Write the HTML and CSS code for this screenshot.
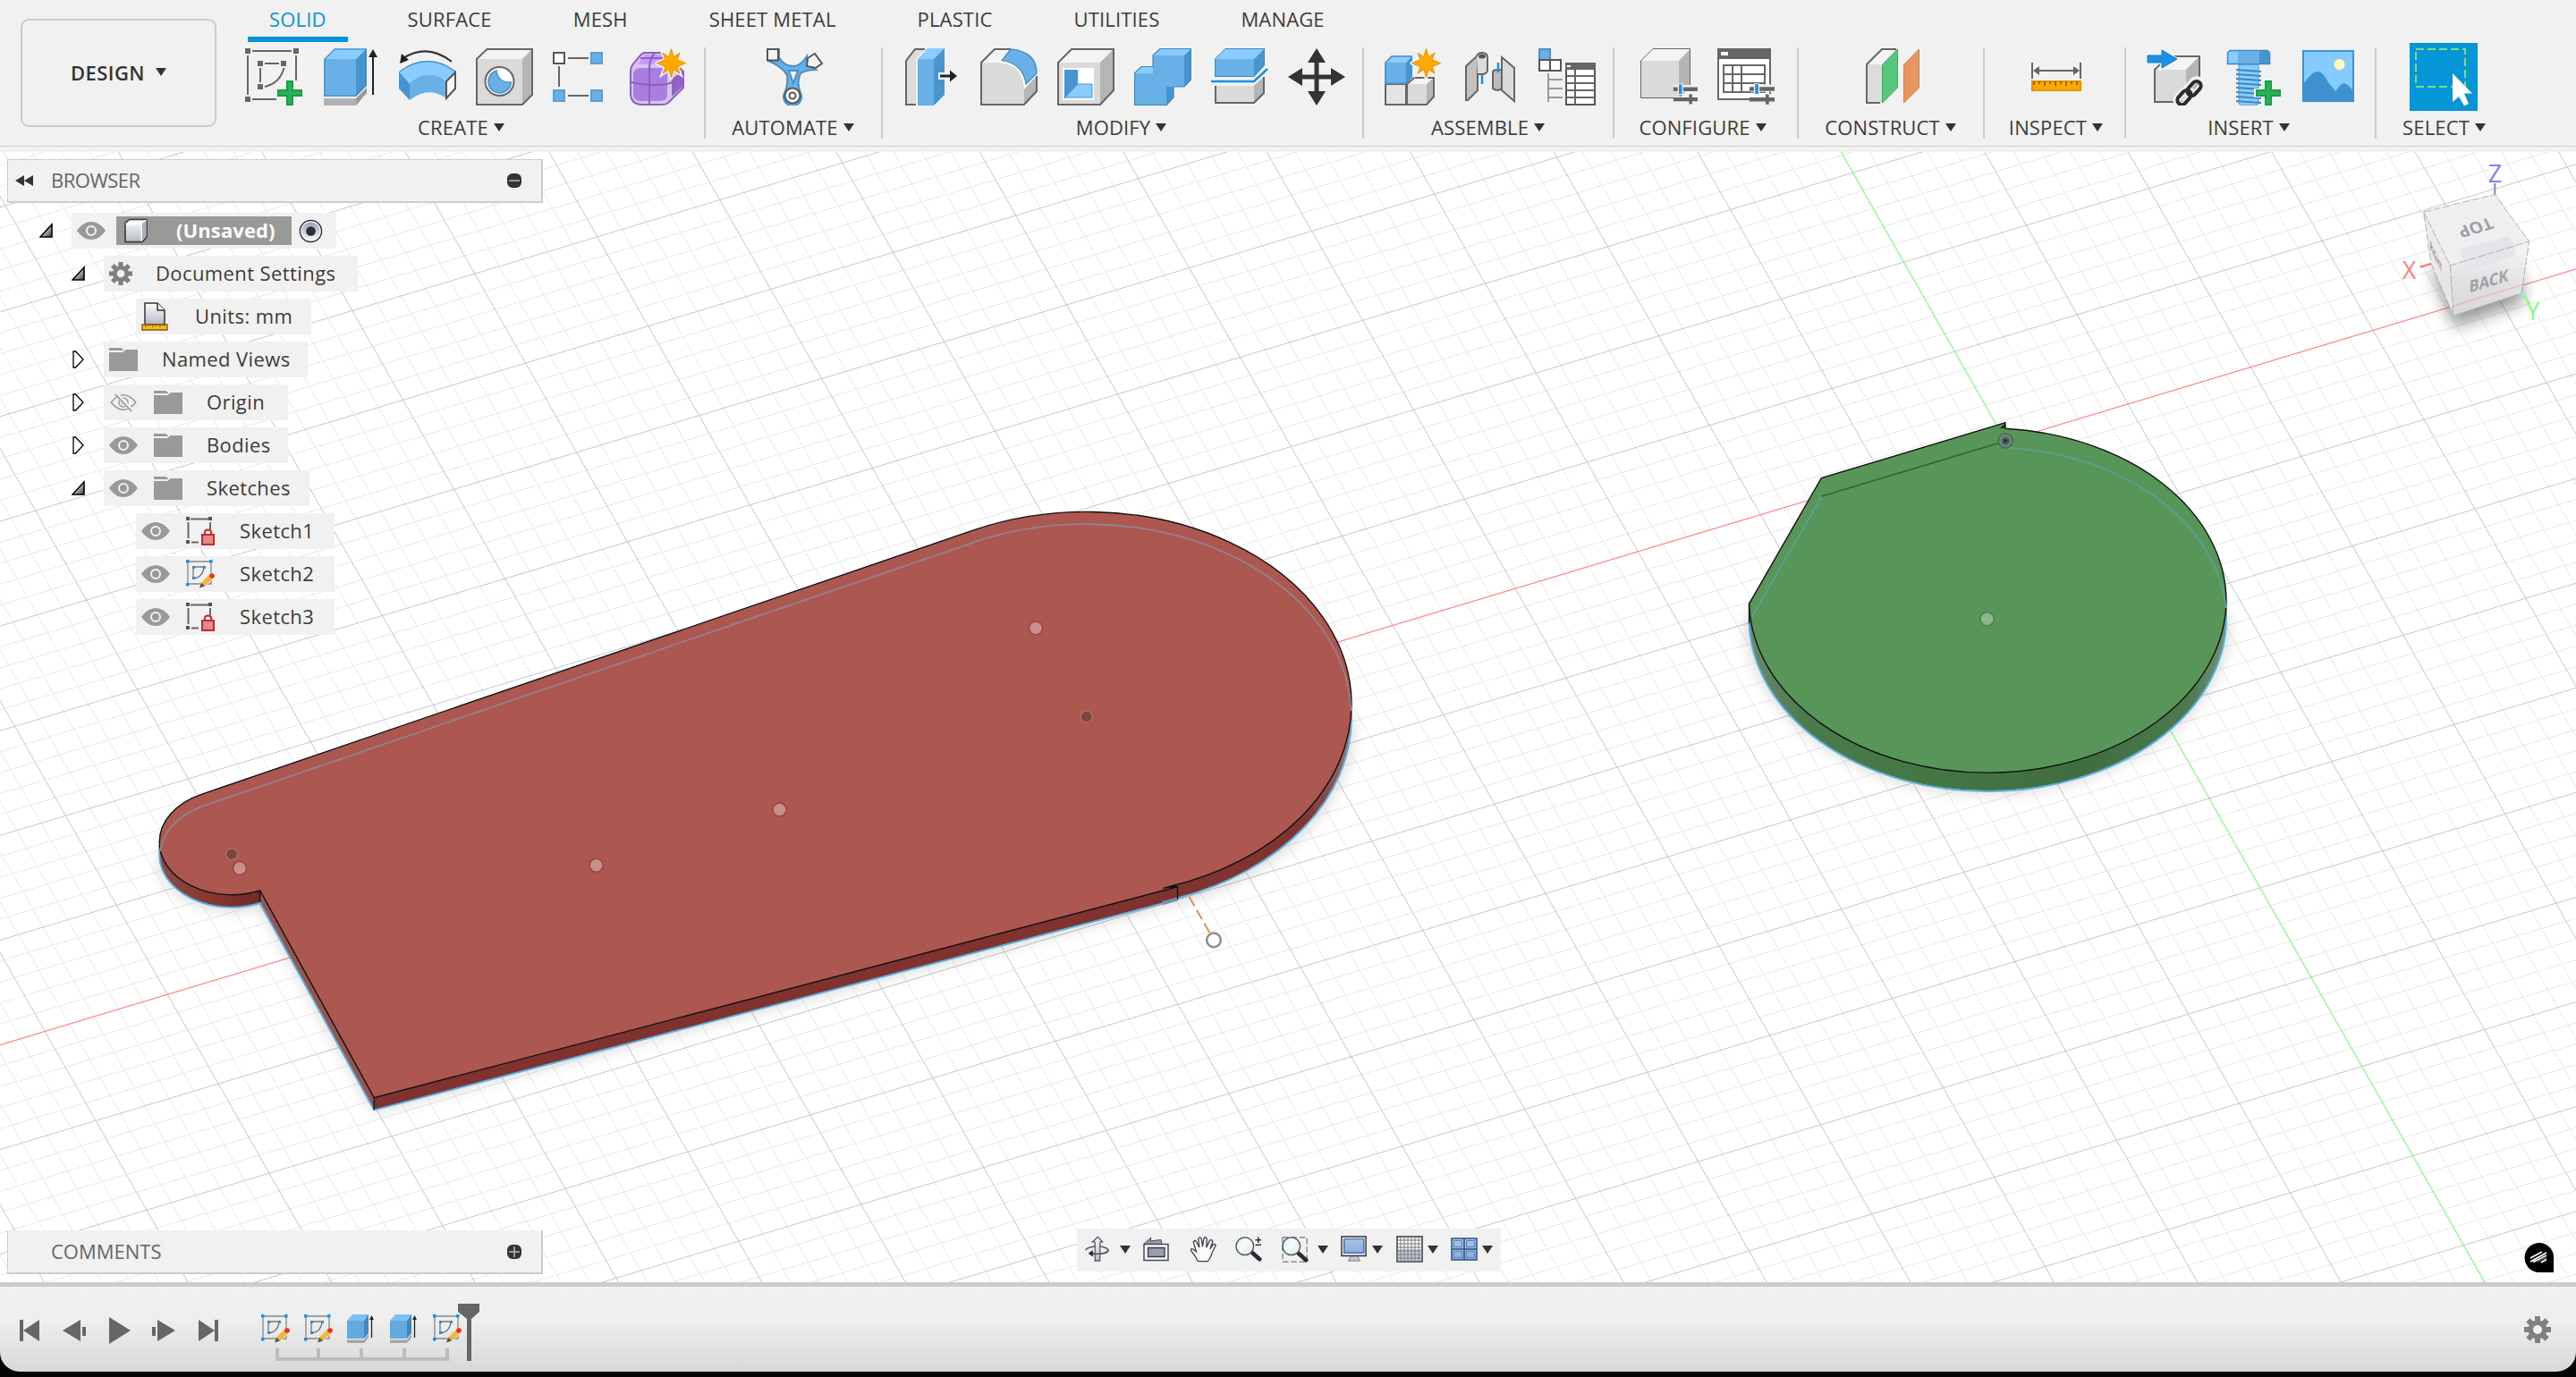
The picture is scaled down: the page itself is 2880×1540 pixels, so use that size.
FILE: index.html
```html
<!DOCTYPE html>
<html lang="en">
<head>
<meta charset="utf-8">
<title>Design workspace</title>
<link rel="stylesheet" href="styles.css">
</head>
<body>
<svg class="defs" width="0" height="0" aria-hidden="true">
  <defs>
    <linearGradient id="g-steel" x1="0" y1="0" x2="0" y2="1"><stop offset="0" stop-color="#fff"/><stop offset="1" stop-color="#b4b9c4"/></linearGradient>
    <linearGradient id="g-tri" x1="0" y1="0" x2="1" y2="1"><stop offset="0.3" stop-color="#eee"/><stop offset="1" stop-color="#333"/></linearGradient>
    <linearGradient id="g-screen" x1="0" y1="0" x2="0" y2="1"><stop offset="0" stop-color="#a9c4e6"/><stop offset="1" stop-color="#8aaedb"/></linearGradient>
    <linearGradient id="g-lens" x1="0" y1="0" x2="1" y2="1"><stop offset="0" stop-color="#d3e6e6"/><stop offset="0.4" stop-color="#f6fcfc"/><stop offset="1" stop-color="#d9e8e8"/></linearGradient>
    <symbol id="i-star" viewBox="-18 -18 36 36"><path d="M0-16 2.700-7 9.500-11.500 6.500-4 16 0 6.500 4 9.500 11.500 2.700 7 0 16-2.700 7-9.500 11.500-6.500 4-16 0-6.500-4-9.500-11.500-2.700-7Z" fill="#f1f1f1" stroke="#f1f1f1" stroke-width="4"/><path d="M0-16 2.700-7 9.500-11.500 6.500-4 16 0 6.500 4 9.500 11.500 2.700 7 0 16-2.700 7-9.500 11.500-6.500 4-16 0-6.500-4-9.500-11.500-2.700-7Z" fill="#ffa800" stroke="#e39500"/></symbol>
    <symbol id="i-plus" viewBox="0 0 28 28"><path d="M11 1h6v10h10v6h-10v10h-6v-10h-10v-6h10z" fill="#28b257" stroke="#1c9c46" stroke-width="2"/></symbol>
    <symbol id="i-sliders" viewBox="0 0 32 28"><path d="M2 7H32M2 22H32M24 14V28" stroke="#f1f1f1" stroke-width="9"/><path d="M1 8H32M1 21H32" stroke="#666" stroke-width="5"/><path d="M23 14.500V27" stroke="#666" stroke-width="4"/><path d="M10 1V15" stroke="#f1f1f1" stroke-width="7"/><path d="M10 2V14" stroke="#1e8fe6" stroke-width="4"/></symbol>

    <symbol id="i-sketch" viewBox="0 0 64 64"><path d="M8 3H52M3 8V52M57 8V36M8 57H35M22 17H38M17 22V38" stroke="#666" stroke-width="2" fill="none"/><path d="M43.500 22Q39 39 22 43" stroke="#666" stroke-width="2" fill="none"/><path d="M0 0h6v6h-6zM54 0h6v6h-6zM0 54h6v6h-6zM14 14h6v6h-6zM40 14h6v6h-6zM14 40h6v6h-6z" fill="#666"/><use href="#i-plus" x="36" y="36" width="28" height="28"/></symbol>
    <symbol id="i-extrude" viewBox="0 0 64 64"><path d="M2 12 14 0H50L38 12Z" fill="#8accff"/><path d="M2 12H38V54H2Z" fill="#68b0e6"/><path d="M38 12 50 0V42L38 54Z" fill="#4794cf"/><path d="M3 53V12.500L14.500 1H49V41.500L37.500 53Z" fill="none" stroke="#3d87c0" stroke-width="1.500" opacity=".7"/><path d="M2 56H38V64H2Z" fill="#b1b1b1"/><path d="M38 56 50 44V50L38 64Z" fill="#999"/><path d="M57 8V52" stroke="#222" stroke-width="2"/><path d="M52 10 57 1l5 9z" fill="#222"/></symbol>
    <symbol id="i-revolve" viewBox="0 0 64 64"><path d="M0 26Q32 2 64 26L52.500 36Q32 24 12 41Z" fill="#8accff"/><path d="M0 26 12 40V58L0 45Z" fill="#4794cf"/><path d="M12 39Q32 22 52 36V55Q32 42 12 58Z" fill="#68b0e6"/><path d="M1 26Q32 3 63 26" fill="none" stroke="#4794cf" stroke-width="1.500"/><path d="M53 37 63 27V45L53 56Z" fill="#f8f8f8" stroke="#555" stroke-width="2"/><path d="M59 15Q32-6 5 11" fill="none" stroke="#333" stroke-width="2.200"/><path d="M1 17 3 6 11 13Z" fill="#222"/></symbol>
    <symbol id="i-hole" viewBox="0 0 64 64"><path d="M1 12 12.500 1H63V52L52 63H1Z" fill="#dadada"/><path d="M1 12 12.500 1H63L52 12Z" fill="#f4f4f4"/><path d="M52 12 63 1V52L52 63Z" fill="#b5b5b5"/><path d="M1 12 12.500 1H63V52L52 63H1Z" fill="none" stroke="#666" stroke-width="2"/><circle cx="26.500" cy="37" r="16" fill="#fff" stroke="#666" stroke-width="2"/><path d="M23 25A12.800 12.800 0 1 0 39.500 38Q25 39 23 25Z" fill="#68b0e6" stroke="#4794cf" stroke-width="1.500"/></symbol>
    <symbol id="i-pattern" viewBox="0 0 64 64"><path d="M17 11H40M7 20V43M17 53H40" stroke="#666" stroke-width="2"/><path d="M1 5h12v12h-12z" fill="#fff" stroke="#555" stroke-width="2"/><path d="M43 5h12v12h-12zM1 47h12v12h-12zM43 47h12v12h-12z" fill="#68b0e6" stroke="#5a9fd2" stroke-width="2"/></symbol>
    <symbol id="i-form" viewBox="0 0 64 64"><path d="M17 5H38L60 26V44L43 61Q40 63 36 63H14Q1 63 1 50V26Q1 20 6 15L12 8Q14 5 17 5Z" fill="#d9c3f3" stroke="#8b63ba" stroke-width="2"/><path d="M12 22H34Q42 22 42 30V52Q42 59 34 59H12Q4 59 4 51V30Q4 22 12 22Z" fill="#a97ee0"/><path d="M17 7H36L40 18H9Z" fill="#c39bf8"/><path d="M47 34 59 26V43L47 54Z" fill="#8f63c4"/><path d="M2 38Q22 43 42 40Q54 36 59 30M22 63V22Q22 12 28 5M12 11H40" stroke="#8b63ba" stroke-width="2" fill="none"/><use href="#i-star" x="28.500" y="-1.300" width="36" height="36"/></symbol>

    <symbol id="i-automate" viewBox="0 0 64 64"><path d="M2 14Q17 20 23 30Q24 43 20 50A10 10 0 1 0 38 50Q33 38 38 28Q44 24 55 24L45 18V9Q38 20 30 20Q19 20 14 10V2Z" fill="#68b0e6" stroke="#4a90c8" stroke-width="2"/><path d="M25 25H35L30 39Z" fill="#f6f6f6" stroke="#4a90c8" stroke-width="2"/><path d="M1 1h12v12.500h-12z" fill="#f4f4f4" stroke="#555" stroke-width="2"/><path d="M54 6 62 17 55 22 45 20 46 11Z" fill="#f4f4f4" stroke="#555" stroke-width="2"/><circle cx="29" cy="53" r="8.500" fill="#fff" stroke="#555" stroke-width="2"/><circle cx="29" cy="53" r="3.500" fill="#fff" stroke="#555" stroke-width="2"/></symbol>

    <symbol id="i-press" viewBox="0 0 64 64"><path d="M3 12 13 1H24L14 12V63H3Z" fill="#dcdcdc"/><path d="M14 63H3V14L13 1H24" fill="none" stroke="#666" stroke-width="2"/><path d="M16 12 27 0H46L34 12Z" fill="#8accff"/><path d="M16 12H34V64H16Z" fill="#68b0e6"/><path d="M34 12 46 0V52L34 64Z" fill="#4794cf"/><path d="M39 27h11v-6l13 10-13 10v-6h-11z" fill="#f1f1f1"/><path d="M41 29.500h11v-5l8 6.500-8 6.500v-5h-11z" fill="#222"/></symbol>
    <symbol id="i-fillet" viewBox="0 0 64 64"><path d="M1 16 16 1H34L22 16Z" fill="#f4f4f4"/><path d="M1 16H20Q49 18 49 46V63H1Z" fill="#dadada"/><path d="M49 46 63 31V48L49 63Z" fill="#b5b5b5"/><path d="M34 1H16L1 16V63H49L63 48V31" fill="none" stroke="#666" stroke-width="2"/><path d="M34 1Q63 4 63 28L51 40Q48 18 24 14Z" fill="#68b0e6" stroke="#4a90c8" stroke-width="1.500"/><path d="M22 15Q47 17 50 44" fill="none" stroke="#fff" stroke-width="2"/></symbol>
    <symbol id="i-shell" viewBox="0 0 64 64"><path d="M1 16 16 1H63V47L48 63H1Z" fill="#dadada"/><path d="M1 16 16 1H63L48 16Z" fill="#f4f4f4"/><path d="M48 16 63 1V47L48 63Z" fill="#b5b5b5"/><path d="M1 16 16 1H63V47L48 63H1Z" fill="none" stroke="#666" stroke-width="2"/><path d="M6 22H41V58H6Z" fill="#fff"/><path d="M8 24H23V40L8 56Z" fill="#4794cf"/><path d="M8 56 23 40H39V55H8Z" fill="#8accff" stroke="#4a90c8"/></symbol>
    <symbol id="i-combine" viewBox="0 0 64 64"><path d="M21 8 29 0H64L56 8ZM0 28 8 20H21V28Z" fill="#8accff"/><path d="M21 8H56V43H36V64H0V28H21Z" fill="#68b0e6"/><path d="M56 8 64 0V35L56 43ZM36 43H44V55L36 64Z" fill="#4794cf"/><path d="M.500 28 8 20.500H21V8L29 .500H63.500V35L56 43H44V55L36 63.500H.500Z" fill="none" stroke="#3d87c0" stroke-width="1.200"/></symbol>
    <symbol id="i-split" viewBox="0 0 64 64"><path d="M4 12 16 0H60L48 12Z" fill="#8accff"/><path d="M4 12H48V32H4Z" fill="#68b0e6"/><path d="M48 12 60 0V19L48 32Z" fill="#4794cf"/><path d="M4.500 31.500V12L16 .500H59.500V19L48 31.500Z" fill="none" stroke="#3d87c0"/><path d="M0 37H48L63 23" stroke="#1e8fe6" stroke-width="2.500" fill="none"/><path d="M5 42H48L59 32V50L48 61H5Z" fill="#dadada"/><path d="M48 42 59 32V50L48 61Z" fill="#b5b5b5"/><path d="M5 42V61H48L59 50V32" fill="none" stroke="#666" stroke-width="2"/></symbol>
    <symbol id="i-move" viewBox="0 0 64 64"><path d="M32 0 42 16H34.500V29.500H48V22L64 32 48 42V34.500H34.500V48H42L32 64 22 48H29.500V34.500H16V42L0 32 16 22V29.500H29.500V16H22Z" fill="#333"/></symbol>

    <symbol id="i-component" viewBox="0 0 64 64"><path d="M1 40H24V63H1Z" fill="#e4e4e4" stroke="#666" stroke-width="2"/><path d="M26 40 33 33H55V54L47 63H26Z" fill="#dadada"/><path d="M26 40 33 33H55L47 40Z" fill="#f4f4f4"/><path d="M47 40 55 33V54L47 63Z" fill="#b5b5b5"/><path d="M25 40 33 33H55V54L47 63H25Z" fill="none" stroke="#666" stroke-width="2"/><path d="M0 16 8 8H31L24 16Z" fill="#8accff"/><path d="M0 16H24V40H0Z" fill="#68b0e6"/><path d="M24 16 31 8V32L24 40Z" fill="#4794cf"/><path d="M1 39V16L8 9H30V32L24 39Z" fill="none" stroke="#4a90c8" stroke-width="1.500"/><use href="#i-star" x="28.500" y="-1.300" width="36" height="36"/></symbol>
    <symbol id="i-joint" viewBox="0 0 64 64"><path d="M5 20 18 8V47L7 58H5Z" fill="#c2c2c2" stroke="#666" stroke-width="2"/><path d="M17 9Q18 5 23 5Q29 5 29 10V25Q28 29 23 29H18" fill="#dadada" stroke="#666" stroke-width="2"/><ellipse cx="23" cy="9" rx="4" ry="2.500" fill="#555"/><path d="M23 30V40" stroke="#1e8fe6" stroke-width="2.500"/><path d="M45 10 59 22V59L45 47Z" fill="#dadada" stroke="#666" stroke-width="2"/><path d="M35 27Q35 24 40 24H45V45Q40 49 35 45Z" fill="#bcbcbc" stroke="#666" stroke-width="2"/><path d="M41 16V27" stroke="#1e8fe6" stroke-width="2.500"/></symbol>
    <symbol id="i-bom" viewBox="0 0 64 64"><path d="M1 1h12v12h-12z" fill="#68b0e6" stroke="#4a90c8" stroke-width="2"/><path d="M1 13h12v12h-12zM13 13h12v12h-12z" fill="#fff" stroke="#555" stroke-width="2"/><path d="M11 28V60M11 35H27M11 45H27M11 55H27" stroke="#999" stroke-width="2" fill="none"/><path d="M31 17H63V63H31Z" fill="#fff" stroke="#555" stroke-width="2"/><path d="M30 16H64V24H30Z" fill="#666"/><path d="M32 19h4v2h-4z" fill="#fff"/><path d="M31 31H63M31 39H63M31 47H63M31 55H63M41 24V63" stroke="#666" stroke-width="2"/></symbol>
    <symbol id="i-config" viewBox="0 0 64 64"><path d="M1 14 14 .500H56V42L43 56H1Z" fill="#dadada"/><path d="M1 14 14 .500H56L43 14Z" fill="#f4f4f4"/><path d="M43 14 56 .500V42L43 56Z" fill="#b5b5b5"/><path d="M.500 14 14 .500H55.500V42L43 55.500H.500Z" fill="none" stroke="#666"/><use href="#i-sliders" x="36" y="38" width="28" height="26"/></symbol>
    <symbol id="i-ctable" viewBox="0 0 64 64"><path d="M1 1H59V57H1Z" fill="#fff" stroke="#666" stroke-width="2"/><path d="M0 0H60V12H0Z" fill="#666"/><path d="M4 4h8v4h-8z" fill="#fff"/><path d="M7 19H53V49H7ZM7 29H53M7 39H53M17 19V49M27 19V49" stroke="#666" stroke-width="2" fill="none"/><use href="#i-sliders" x="35" y="38" width="29" height="26"/></symbol>
    <symbol id="i-plane" viewBox="0 0 64 64"><path d="M3 18 20 1H38L20 18V61H3Z" fill="#dcdcdc"/><path d="M3 18 20 1H36L20 18Z" fill="#f4f4f4"/><path d="M18 61H3V18L20 1H36" fill="none" stroke="#666" stroke-width="2"/><path d="M20.500 18.500 37.500 1V44L20.500 61Z" fill="#57c57d" stroke="#3daa63"/><path d="M44.500 18.500 61.500 1V44L44.500 61Z" fill="#e59661" stroke="#cf7f48"/></symbol>
    <symbol id="i-measure" viewBox="0 0 64 64"><path d="M5 16V34M59 16V34M8 25H56" stroke="#666" stroke-width="2"/><path d="M6 25 13 20V30ZM58 25 51 20V30Z" fill="#666"/><path d="M5 37H59V47H5Z" fill="#ffa800" stroke="#e39500" stroke-width="2"/><path d="M7 37V41M13 37V40M19 37V42M25 37V40M31 37V42M37 37V40M43 37V42M49 37V40M55 37V41" stroke="#7a5410" stroke-width="1.500"/></symbol>
    <symbol id="i-derive" viewBox="0 0 64 64"><path d="M9 24 24 9H59V46L44 60H9Z" fill="#dadada"/><path d="M9 24 24 9H59L44 24Z" fill="#f4f4f4"/><path d="M44 24 59 9V46L44 60Z" fill="#b5b5b5"/><path d="M9 24 24 9H59V46L44 60H9Z" fill="none" stroke="#666" stroke-width="2"/><path d="M0 6H15V-1L37 12 15 25V18H0Z" fill="#f1f1f1"/><path d="M1 8H17V2L34 12 17 22V16H1Z" fill="#1e8fe6" stroke="#1678c6"/><g fill="none" stroke="#f1f1f1" stroke-width="8"><rect x="-10" y="-5.500" width="20" height="11" rx="5.500" transform="translate(53 44) rotate(-48)"/><rect x="-10" y="-5.500" width="20" height="11" rx="5.500" transform="translate(42 55) rotate(-48)"/></g><g fill="none" stroke="#2b2b2b" stroke-width="4"><rect x="-9" y="-5" width="18" height="10" rx="5" transform="translate(53 45) rotate(-48)"/><rect x="-9" y="-5" width="18" height="10" rx="5" transform="translate(42 55) rotate(-48)"/></g></symbol>
    <symbol id="i-bolt" viewBox="0 0 64 64"><path d="M17 18H39V62L36 64H20L17 62Z" fill="#8accff" stroke="#4a90c8"/><path d="M7 2.500H49L51.500 5V17.500H4.500V5Z" fill="#8accff" stroke="#3d87c0" stroke-width="1.500"/><path d="M16 3H40V17H16Z" fill="#68b0e6"/><path d="M40 3H49L51 5V17H40Z" fill="#4794cf"/><path d="M14 24 42 26M14 29 42 31M14 34 42 36M14 39 42 41M14 44 42 46M14 49 42 51M14 54 42 56M14 59 42 61" stroke="#3d87c0" stroke-width="1.800"/><path d="M34 45H45V34H55V45H66V55H55V66H45V55H34Z" fill="#f1f1f1"/><use href="#i-plus" x="36" y="36" width="28" height="28"/></symbol>
    <symbol id="i-picture" viewBox="0 0 64 64"><path d="M2 2H60V60H2Z" fill="#84cbff"/><path d="M2 60V42Q12 26 19 26Q25 26 31 38L39 48Q46 38 49 39Q55 41 60 50V60Z" fill="#3f92cf"/><circle cx="43.500" cy="18" r="6.500" fill="#fdf9c4" stroke="#9ec9d8"/><path d="M3 3H59V59H3Z" fill="none" stroke="#3f92cf" stroke-width="2"/></symbol>
    <symbol id="i-select" viewBox="0 0 76 76"><path d="M0 0H76V76H0Z" fill="#0696d7"/><path d="M7 7H62V49H7Z" fill="none" stroke="#7be07b" stroke-width="2" stroke-dasharray="9 4"/><path d="M48 34V66L55 60 61 70.500 66 68 61 56.500H70Z" fill="#fff"/></symbol>

    <symbol id="t-open" viewBox="0 0 16 16"><path d="M14 1V15H1Z" fill="url(#g-tri)" stroke="#000" stroke-width="1.600"/></symbol>
    <symbol id="t-closed" viewBox="0 0 16 20"><path d="M2 1H4.500L13 10 4.500 19H2Z" fill="#fff" stroke="#000" stroke-width="1.300"/></symbol>
    <symbol id="i-eye" viewBox="0 0 32 22"><path d="M0 11Q7 1 16 1T32 11Q25 21 16 21T0 11Z" fill="#999"/><circle cx="16" cy="11" r="5" fill="#999" stroke="#f1f1f1" stroke-width="2"/></symbol>
    <symbol id="i-eyeoff" viewBox="0 0 32 24"><path d="M1 12Q8 3 16 3T31 12Q24 21 16 21T1 12Z" fill="none" stroke="#999" stroke-width="1.700"/><circle cx="16" cy="12" r="5.500" fill="none" stroke="#999" stroke-width="1.700"/><circle cx="16" cy="12" r="2.500" fill="#999"/><path d="M7 1 27 23" stroke="#f1f1f1" stroke-width="5"/><path d="M6 2 26 23" stroke="#999" stroke-width="1.800"/></symbol>
    <symbol id="i-folder" viewBox="0 0 32 26"><path d="M0 0H13L16 2V3H0ZM0 5H15L19 2H32V26H0Z" fill="#999"/></symbol>
    <symbol id="i-gear" viewBox="-15 -15 30 30"><g fill="currentColor"><path d="M-3-15H3V15H-3Z"/><path d="M-3-15H3V15H-3Z" transform="rotate(45)"/><path d="M-3-15H3V15H-3Z" transform="rotate(90)"/><path d="M-3-15H3V15H-3Z" transform="rotate(135)"/><circle r="10.500"/></g><circle r="5" fill="#f1f1f1"/></symbol>
    <symbol id="i-doc" viewBox="0 0 28 28"><path d="M1 5 6 1H26V21L21 27H1Z" fill="url(#g-steel)" stroke="#333" stroke-width="1.600"/><path d="M1.500 6H20V26M20 6 25.500 1.500" stroke="#fff" fill="none" stroke-width="1.500"/><path d="M20.700 6 25.500 1.700V20.700L20.700 26Z" fill="#aab0bb"/></symbol>
    <symbol id="i-radio" viewBox="0 0 28 28"><circle cx="14" cy="14" r="12.500" fill="#fff" stroke="#2c3340" stroke-width="1.500"/><circle cx="14" cy="14" r="10.500" fill="url(#g-radio)"/><circle cx="14" cy="14" r="5.500" fill="#2a2d33"/></symbol>
    <linearGradient id="g-radio" x1="0" y1="0" x2="0" y2="1"><stop offset="0" stop-color="#98a3b8"/><stop offset="1" stop-color="#f4f6fa"/></linearGradient>
    <symbol id="i-units" viewBox="0 0 30 32"><path d="M4 1H18L26 9V25H4Z" fill="url(#g-steel)" stroke="#333" stroke-width="1.500"/><path d="M18 1V9H26" fill="#fff" stroke="#333" stroke-width="1.500"/><path d="M1 25H29V31H1Z" fill="#f2bd2b" stroke="#8a5a08" stroke-width="1.400"/><path d="M5 25V28M9 25V27M13 25V28M17 25V27M21 25V28M25 25V27" stroke="#8a5a08"/></symbol>
    <symbol id="i-sklock" viewBox="0 0 32 32"><path d="M5 2.500H25M2.500 6V24M27 6V14M6 28.500H14" stroke="#666" stroke-width="2"/><path d="M0 0h4v4h-4zM25 0h4v4h-4zM0 26h4v4h-4z" fill="#555"/><path d="M18 20H31V31H18Z" fill="#e08a8a" stroke="#cc2626" stroke-width="2"/><path d="M21 20V17Q21 14.500 24.500 14.500T28 17V20" fill="none" stroke="#cc2626" stroke-width="2"/></symbol>
    <symbol id="i-skpen" viewBox="0 0 32 32"><path d="M2 2H28V27H2Z" fill="none" stroke="#888" stroke-width="1.300"/><path d="M8 8H20Q19 20 8 21Z" fill="none" stroke="#777" stroke-width="1.300"/><path d="M0 0h3.500v3.500h-3.500zM26 0h3.500v3.500h-3.500zM0 26h3.500v3.500h-3.500zM7 7h3v3h-3zM19 7h3v3h-3zM7 19h3v3h-3z" fill="#1e8fe6"/><path d="M15 31.500 17 25 26.500 16 31 20.500 21.500 29.500Z" fill="#f3b73e" stroke="#f1f1f1" stroke-width=".8"/><path d="M15 31.500 17 25.500 21 29.500Z" fill="#555"/><circle cx="29" cy="18" r="2.800" fill="#ee2b2b"/></symbol>
    <symbol id="i-ext-s" viewBox="0 0 32 32"><path d="M0 7 6 0H24L19 7Z" fill="#7cc0f3"/><path d="M0 7H19V27H0Z" fill="#62a9e0"/><path d="M19 7 24 0V21L19 27Z" fill="#4088c4"/><path d="M0 28.500H19V32H0ZM19 28.500 24 22V26L19 32Z" fill="#a5a5a5"/><path d="M27.500 4V26" stroke="#222" stroke-width="1.300"/><path d="M25 6 27.500 1 30 6Z" fill="#222"/></symbol>

    <symbol id="n-orbit" viewBox="0 0 30 32"><path d="M1 17.500A13.500 4.500 0 1 1 9 21.500" fill="none" stroke="#555b66" stroke-width="1.600"/><path d="M15 1 20.500 7H17.500V29.500H11.500V7H8.500Z" transform="translate(.5 .5)" fill="url(#g-steel)" stroke="#444a55" stroke-width="1.200"/><path d="M28 17.500Q25 22.500 8 21.500" fill="none" stroke="#555b66" stroke-width="1.800"/><path d="M4 21 9.500 17V25Z" fill="#23262c"/></symbol>
    <symbol id="n-look" viewBox="0 0 30 30"><path d="M1 9 9 2 8 6 20 4.500 21 10H2Z" fill="#9aa0ab" stroke="#444a55"/><path d="M1 9.500H28V27.500H1Z" fill="#f8f8fa" stroke="#444a55" stroke-width="1.500"/><path d="M5.500 13.500H24V23.500H5.500Z" fill="#9aa0ab" stroke="#333947" stroke-width="1.300"/></symbol>
    <symbol id="n-hand" viewBox="0 0 32 32"><path d="M9.500 30Q8 25 4 21 L1.500 17.500Q1.500 15 4 16L8 19 4.500 7.500Q6 4.500 8 7L11.500 14 10.500 3.500Q12 .500 14 3.500L15.500 13 17 3Q19 .500 20.500 3.500L20 14 24 5.500Q27 4 27.500 7L24.500 16 28 10.500Q31 9 31 12Q27 19 25.500 24Q24 28 21.500 30.500H12Z" fill="#fbfbfd" stroke="#3c414b" stroke-width="1.400"/></symbol>
    <symbol id="n-zoom" viewBox="0 0 32 32"><path d="M20 20 29 28" stroke="#2a2d33" stroke-width="5" stroke-linecap="round"/><circle cx="11.500" cy="12.500" r="10.500" fill="url(#g-lens)" stroke="#4a505c" stroke-width="1.400"/><path d="M24 5H31M27.500 1.500V8.500M24 11H31" stroke="#333" stroke-width="1.600"/></symbol>
    <symbol id="n-window" viewBox="0 0 32 32"><path d="M1 2H30V31H1Z" fill="none" stroke="#777" stroke-width="1.300" stroke-dasharray="7 3"/><path d="M20 21 29 29" stroke="#2a2d33" stroke-width="5" stroke-linecap="round"/><circle cx="11.500" cy="12.500" r="10.500" fill="url(#g-lens)" stroke="#4a505c" stroke-width="1.400"/></symbol>
    <symbol id="n-display" viewBox="0 0 32 32"><path d="M12 24H20L23 30H9Z" fill="#c4c8d0" stroke="#666" stroke-width=".8"/><path d="M1 1H30V24H1Z" fill="#e8eaee" stroke="#30343c" stroke-width="1.500"/><path d="M4 4H27.500V20.500H4Z" fill="url(#g-screen)" stroke="#3b5c99" stroke-width="1.300"/></symbol>
    <symbol id="n-grid" viewBox="0 0 30 30"><path d="M1 1H29V29H1Z" fill="#fff" stroke="#30343c" stroke-width="1.500"/><path d="M5 1V29M9 1V29M13 1V29M17 1V29M21 1V29M25 1V29M1 5H29M1 9H29M1 13H29M1 17H29M1 21H29M1 25H29" stroke="#777" stroke-width="1"/><path d="M1 15H29V29H1Z" fill="#7d8699" opacity=".45"/></symbol>
    <symbol id="n-views" viewBox="0 0 30 28"><path d="M1 2H29V26H1Z" fill="url(#g-screen)" stroke="#2c5087" stroke-width="1.500"/><path d="M15 2V26M1 14H29" stroke="#2c5087" stroke-width="1.500"/><path d="M3.500 4.500h9v7h-9zM17.500 4.500h9v7h-9zM3.500 16.500h9v7h-9zM17.500 16.500h9v7h-9z" fill="none" stroke="#5d82b8"/></symbol>
  </defs>
</svg>

<div class="app">
  <header class="ribbon">
    <button class="workspace">DESIGN<i class="caret"></i></button>
    <div class="ribbon-main">
      <nav class="tabs">
        <a class="tab active">SOLID</a><a class="tab">SURFACE</a><a class="tab">MESH</a><a class="tab">SHEET METAL</a><a class="tab">PLASTIC</a><a class="tab">UTILITIES</a><a class="tab">MANAGE</a>
      </nav>
      <div class="groups">
        <section class="group g-create"><div class="icons"><svg><use href="#i-sketch"/></svg><svg><use href="#i-extrude"/></svg><svg><use href="#i-revolve"/></svg><svg><use href="#i-hole"/></svg><svg><use href="#i-pattern"/></svg><svg><use href="#i-form"/></svg></div><div class="glabel">CREATE<i class="caret"></i></div></section>
        <section class="group g-automate"><div class="icons"><svg><use href="#i-automate"/></svg></div><div class="glabel">AUTOMATE<i class="caret"></i></div></section>
        <section class="group g-modify"><div class="icons"><svg><use href="#i-press"/></svg><svg><use href="#i-fillet"/></svg><svg><use href="#i-shell"/></svg><svg><use href="#i-combine"/></svg><svg><use href="#i-split"/></svg><svg><use href="#i-move"/></svg></div><div class="glabel">MODIFY<i class="caret"></i></div></section>
        <section class="group g-assemble"><div class="icons"><svg><use href="#i-component"/></svg><svg><use href="#i-joint"/></svg><svg><use href="#i-bom"/></svg></div><div class="glabel">ASSEMBLE<i class="caret"></i></div></section>
        <section class="group g-configure"><div class="icons"><svg><use href="#i-config"/></svg><svg><use href="#i-ctable"/></svg></div><div class="glabel">CONFIGURE<i class="caret"></i></div></section>
        <section class="group g-construct"><div class="icons"><svg><use href="#i-plane"/></svg></div><div class="glabel">CONSTRUCT<i class="caret"></i></div></section>
        <section class="group g-inspect"><div class="icons"><svg><use href="#i-measure"/></svg></div><div class="glabel">INSPECT<i class="caret"></i></div></section>
        <section class="group g-insert"><div class="icons"><svg><use href="#i-derive"/></svg><svg><use href="#i-bolt"/></svg><svg><use href="#i-picture"/></svg></div><div class="glabel">INSERT<i class="caret"></i></div></section>
        <section class="group g-select"><div class="icons"><svg class="big"><use href="#i-select"/></svg></div><div class="glabel">SELECT<i class="caret"></i></div></section>
      </div>
    </div>
  </header>

  <main class="viewport">
    <svg class="scene" viewBox="0 170 2880 1264">
      <defs>
        <filter id="soft" x="-10%" y="-10%" width="120%" height="130%"><feGaussianBlur stdDeviation="9"/></filter>
        <linearGradient id="g-rim" gradientUnits="userSpaceOnUse" x1="1955" y1="0" x2="2489" y2="0"><stop offset="0" stop-color="#6a8a6d"/><stop offset=".12" stop-color="#4c7a4d"/><stop offset=".35" stop-color="#457745"/><stop offset=".7" stop-color="#406d40"/><stop offset=".92" stop-color="#4c7a4d"/><stop offset="1" stop-color="#75907a"/></linearGradient>
        <linearGradient id="r-rim" gradientUnits="userSpaceOnUse" x1="178" y1="0" x2="291" y2="0"><stop offset="0" stop-color="#8f4a45"/><stop offset=".5" stop-color="#87372f"/><stop offset="1" stop-color="#6e2a26"/></linearGradient>
        <linearGradient id="r-big" gradientUnits="userSpaceOnUse" x1="0" y1="800" x2="0" y2="920"><stop offset="0" stop-color="#a08a92"/><stop offset="1" stop-color="#80342f"/></linearGradient>
        <linearGradient id="cube-b" x1="0" y1="0" x2="0" y2="1"><stop offset="0" stop-color="#f3f3f4"/><stop offset="1" stop-color="#dcdcde"/></linearGradient>
      </defs>
      <g id="plane" transform="matrix(137 -41.27 56.9 99.95 2242.2 493.1)">
        <path id="minor" class="grid-minor"/>
        <path id="major" class="grid-major"/>
        <path class="axis-x" d="M-30 0H30"/>
        <path class="axis-y" d="M0-30V30"/>
      </g>

      <g class="body-red">
        <path d="M178 955A81 59 0 0 0 291 1012L418 1242 1318 1008A296 215 0 0 0 1512 800Z" fill="#000" opacity=".17" filter="url(#soft)"/>
        <path d="M178.200 941.700V955.400A80.800 58.700 0 0 0 290.800 1009.700V996Z" fill="url(#r-rim)"/>
        <path d="M290.800 996V1009.700L418.200 1241.400V1227.700Z" fill="#99544e"/>
        <path d="M418.200 1227.700V1241.400L1316.500 1005.500V990Z" fill="#80332e"/>
        <path d="M1511 787.500V801.200A296.300 215.100 0 0 1 1316.500 1004.500V985Z" fill="url(#r-big)"/>
        <path d="M1511 795V801.400A296.300 215.100 0 0 1 1316.500 1004.500M1316.500 1006 418.200 1241.500 290.800 1010A80.800 58.700 0 0 1 178.200 955.400V945" class="edge-blue"/>
        <path d="M224.500 888.600 1088.400 592.900A296.300 215.100 0 0 1 1511 787.500A296.300 215.100 0 0 1 1306 992L1316.500 991.800 418.200 1227.700 290.800 996A80.800 58.700 0 0 1 178.200 941.700A80.800 58.700 0 0 1 224.500 888.600Z" fill="#ad5751" stroke="#111" stroke-width="1.400"/>
        <path d="M178.800 952Q184 919 224.500 902.300L1088.400 606.600A296.300 215.100 0 0 1 1510.500 795" class="edge-grey"/>
        <path d="M290.800 996V1009M418.200 1227.700V1241M1316.500 991V1006M1300.500 993.500 1316.500 989.500" class="edge-dark"/>
        <path d="M1300 1010 1316 1005.500" stroke="#6f93ab" stroke-width="4"/>
        <path d="M1163 714 1320 984M676 965 864 908M272 978 287 1006" class="link-faint"/>
        <path d="M1329.500 1003 1353.500 1045" class="link"/>
        <g class="pt-light"><circle cx="268" cy="971" r="7.500"/><circle cx="666.700" cy="967.700" r="7.500"/><circle cx="871.500" cy="905.500" r="7.500"/><circle cx="1158" cy="702.500" r="7.500"/></g>
        <g class="pt-dark"><circle cx="259" cy="955.300" r="6.500"/><circle cx="1214.700" cy="801.400" r="6.500"/></g>
        <circle cx="1357" cy="1051.400" r="7.800" fill="#fff" stroke="#8c8c8c" stroke-width="2.500"/>
      </g>

      <g class="body-green">
        <path d="M1952 688A270 198 0 0 0 2492 688Z" fill="#000" opacity=".17" filter="url(#soft)"/>
        <path d="M1955.500 672.600V695A266.800 193.700 0 0 0 2489 693.600V672.600Z" fill="url(#g-rim)"/>
        <path d="M1955.500 696A266.800 193.700 0 0 0 2489 693.600V680" class="edge-blue"/>
        <path d="M1955.500 675.300 2036.300 534.700 2242 472.700V479.300A266.800 193.700 0 0 1 2489 672.600A266.800 193.700 0 0 1 1955.500 675.300Z" fill="#589558" stroke="#111" stroke-width="1.400"/>
        <path d="M1955.500 675V697" class="edge-dark"/>
        <path d="M2236 479 2242 473V479Z" fill="#1d301d"/>
        <path d="M2036.300 556 1958.500 690M2242 500.400A266.800 193.700 0 0 1 2488.500 680" fill="none" stroke="#58a08f" stroke-width="2"/>
        <path d="M2036.500 555 2238 494.500" stroke="#3a633a" stroke-width="1.800"/>
        <circle cx="2242.200" cy="493" r="6" fill="#4b5f55" stroke="#6d8787" stroke-width="3"/><circle cx="2242.200" cy="493" r="8" fill="none" stroke="#456b4b" stroke-width="1.500"/><circle cx="2242.200" cy="493" r="2" fill="#24352a"/>
        <circle cx="2221.600" cy="692.300" r="7.500" fill="#8db68d" stroke="#4c834c" stroke-width="1.500"/>
      </g>

      <g class="viewcube">
        <path d="M2718 300 2744 366 2822 338 2816 300Z" fill="#000" opacity=".4" filter="url(#soft)"/>
        <path d="M2709.600 237 2739.400 297 2743 353 2718 295Z" fill="#e9e9ea" opacity=".93"/>
        <path d="M2739.400 297 2827.600 270 2819 328 2743 353Z" fill="url(#cube-b)" opacity=".93"/>
        <path d="M2709.600 237 2789 217.500 2827.600 270 2739.400 297Z" fill="#eeeeef" opacity=".95"/>
        <path d="M2750 279 2805 264 2812.400 276.700 2810.600 287 2756.400 303.700 2755.500 293Z" fill="#e3e5ea"/>
        <path d="M2709.600 237 2789 217.500 2827.600 270 2819 328 2743 353 2718 295ZM2709.600 237 2739.400 297 2827.600 270M2739.400 297 2743 353" fill="none" stroke="#aaa" stroke-width=".9" stroke-dasharray="9 2"/>
        <path d="M2743 342 2822 318" stroke="#f0b0b0"/>
        <text class="face" transform="matrix(-.88 .27 -.38 -.8 2783.500 243)">TOP</text>
        <text class="face back" transform="matrix(.82 -.25 -.02 .93 2760.500 327.500)">BACK</text>
        <text class="face side" transform="matrix(.29 .62 .06 .95 2717 278)">RIGHT</text>
        <path d="M2789.300 205V217.500" stroke="#8080ff" stroke-width="2"/><path d="M2705.500 298.700 2718 295" stroke="#ff7070" stroke-width="2"/><path d="M2819 327 2828 340" stroke="#80ff80" stroke-width="2"/>
        <text class="axis" x="2789.500" y="204" fill="#8080ff">Z</text><text class="axis" x="2693.500" y="312" fill="#ff8080">X</text><text class="axis" x="2831.500" y="357.500" fill="#80ff80">Y</text>
      </g>
    </svg>

    <aside class="browser">
      <div class="panel"><svg class="collapse" viewBox="0 0 20 12"><path d="M10 0V12L0 6ZM20 0V12L10 6Z" fill="#333"/></svg><span class="ptitle">BROWSER</span><svg class="toggle" viewBox="0 0 16 16"><rect width="16" height="16" rx="6" fill="#333"/><path d="M2 8H14" stroke="#bbb" stroke-width="1.500"/></svg></div>
      <ul class="tree">
        <li class="l0"><svg class="tw"><use href="#t-open"/></svg><div class="row w296"><svg class="eye"><use href="#i-eye"/></svg><div class="sel"><svg class="cube"><use href="#i-doc"/></svg><b>(Unsaved)</b></div><svg class="radio"><use href="#i-radio"/></svg></div></li>
        <li class="l1"><svg class="tw"><use href="#t-open"/></svg><div class="row w284"><svg class="gear"><use href="#i-gear"/></svg><span>Document Settings</span></div></li>
        <li class="l2"><i class="tw"></i><div class="row w196"><svg class="units"><use href="#i-units"/></svg><span>Units: mm</span></div></li>
        <li class="l1"><svg class="tw"><use href="#t-closed"/></svg><div class="row w228"><svg class="folder"><use href="#i-folder"/></svg><span>Named Views</span></div></li>
        <li class="l1"><svg class="tw"><use href="#t-closed"/></svg><div class="row w206"><svg class="eye"><use href="#i-eyeoff"/></svg><svg class="folder"><use href="#i-folder"/></svg><span>Origin</span></div></li>
        <li class="l1"><svg class="tw"><use href="#t-closed"/></svg><div class="row w206"><svg class="eye"><use href="#i-eye"/></svg><svg class="folder"><use href="#i-folder"/></svg><span>Bodies</span></div></li>
        <li class="l1"><svg class="tw"><use href="#t-open"/></svg><div class="row w230"><svg class="eye"><use href="#i-eye"/></svg><svg class="folder"><use href="#i-folder"/></svg><span>Sketches</span></div></li>
        <li class="l2"><i class="tw"></i><div class="row w222"><svg class="eye"><use href="#i-eye"/></svg><svg class="sk"><use href="#i-sklock"/></svg><span>Sketch1</span></div></li>
        <li class="l2"><i class="tw"></i><div class="row w222"><svg class="eye"><use href="#i-eye"/></svg><svg class="sk"><use href="#i-skpen"/></svg><span>Sketch2</span></div></li>
        <li class="l2"><i class="tw"></i><div class="row w222"><svg class="eye"><use href="#i-eye"/></svg><svg class="sk"><use href="#i-sklock"/></svg><span>Sketch3</span></div></li>
      </ul>
    </aside>

    <div class="panel comments"><span class="ptitle">COMMENTS</span><svg class="toggle" viewBox="0 0 16 16"><rect width="16" height="16" rx="6" fill="#333"/><path d="M2 8H14M8 2V14" stroke="#bbb" stroke-width="1.500"/></svg></div>

    <div class="navbar">
      <svg><use href="#n-orbit"/></svg><i class="caret c1"></i>
      <svg class="m1"><use href="#n-look"/></svg><svg class="m2"><use href="#n-hand"/></svg><svg class="m2"><use href="#n-zoom"/></svg><svg class="m2"><use href="#n-window"/></svg><i class="caret c1"></i>
      <svg class="m3"><use href="#n-display"/></svg><i class="caret c2"></i>
      <svg class="m3"><use href="#n-grid"/></svg><i class="caret c2"></i>
      <svg class="m3"><use href="#n-views"/></svg><i class="caret c2"></i>
    </div>

    <svg class="assistant" viewBox="0 0 32 33"><path d="M16 0A16 16 0 0 1 32 16V33H16A16 16 0 0 1 16 0Z" fill="#000"/><path d="M6 17 19 10M6 21 24 11M9 21.500 24 14" stroke="#fff" stroke-width="1.800"/><path d="M14 21 24 16" stroke="#555" stroke-width="2"/><path d="M18 22 24 18.500" stroke="#fff" stroke-width="1.800"/></svg>
  </main>

  <footer class="timeline">
    <div class="controls">
      <svg class="k1" viewBox="0 0 22 24"><path d="M0 0H4V24H0ZM22 0V24L4 12Z" fill="#666"/></svg>
      <svg class="k2" viewBox="0 0 26 24"><path d="M20 0V24L0 12ZM22 8H26V18H22Z" fill="#666"/></svg>
      <svg class="k3" viewBox="0 0 24 30"><path d="M0 0 24 15 0 30Z" fill="#666"/></svg>
      <svg class="k2" viewBox="0 0 26 24"><path d="M6 0V24L26 12ZM0 8H4V18H0Z" fill="#666"/></svg>
      <svg class="k1" viewBox="0 0 22 24"><path d="M18 0H22V24H18ZM0 0V24L18 12Z" fill="#666"/></svg>
    </div>
    <div class="features">
      <div class="feats"><svg><use href="#i-skpen"/></svg><svg><use href="#i-skpen"/></svg><svg><use href="#i-ext-s"/></svg><svg><use href="#i-ext-s"/></svg><svg><use href="#i-skpen"/></svg></div>
      <svg class="bracket" viewBox="0 0 194 14"><path d="M2 0V12H192V0M48 0V12M96 0V12M144 0V12" fill="none" stroke="#bcbcbc" stroke-width="4"/></svg>
      <svg class="marker" viewBox="0 0 24 64"><path d="M0 0H24V9L15 17V64H10V17L0 9Z" fill="#666"/></svg>
    </div>
    <svg class="settings"><use href="#i-gear"/></svg>
  </footer>
</div>
<script src="grid.js"></script>
</body>
</html>
```

FILE: styles.css
```css
* { box-sizing: border-box; }
body { margin: 0; background: #050505; font-family: "Open Sans", "Noto Sans", sans-serif; font-size: 22px; color: #3c3c3c; }
svg { display: block; flex: none; overflow: visible; }
.defs { position: absolute; }
.app { width: 2880px; height: 1540px; display: flex; flex-direction: column; overflow: hidden; }
.caret { width: 0; height: 0; flex: none; border: 6px solid transparent; border-top: 9px solid #333; border-bottom: 0; }

/* ribbon */
.ribbon { height: 170px; flex: none; display: flex; background: linear-gradient(#f1f1f1 163px, #ccc 163px 164.500px, #f1f1f1 164.500px); }
.workspace { width: 219px; height: 121px; margin: 21px 0 0 23px; padding: 0 0 2px; border: 2px solid #ccc; border-radius: 9px; background: none; font: 600 22px "Open Sans", sans-serif; letter-spacing: .4px; color: #333; display: flex; align-items: center; justify-content: center; gap: 12px; }
.ribbon-main { display: flex; flex-direction: column; }
.tabs { height: 47px; padding-left: 35px; display: flex; gap: 43px; line-height: 42px; letter-spacing: .16px; }
.tab { padding: 0 24px; white-space: nowrap; height: 47px; }
.tab.active { color: #0696d7; border-bottom: 6px solid #0696d7; }
.groups { display: flex; margin: 6px 0 0 8px; }
.group { height: 102px; border-right: 2px solid #ccc; display: flex; flex-direction: column; align-items: center; }
.icons { height: 64px; margin-top: 1px; padding-left: 4px; display: flex; align-items: center; gap: 22px; }
.icons svg { width: 64px; height: 64px; }
.icons svg.big { width: 76px; height: 76px; }
.glabel { margin-top: 9px; height: 30px; line-height: 30px; padding-right: 1px; display: flex; align-items: center; gap: 6px; letter-spacing: .15px; }
.g-create { width: 539px; }
.g-create .glabel { padding-right: 6px; }
.g-automate { width: 198px; }
.g-modify { width: 538px; }
.g-modify .glabel { padding-right: 3px; }
.g-assemble { width: 280px; }
.g-configure { width: 206px; }
.g-configure .glabel { padding-right: 7px; }
.g-construct { width: 208px; }
.g-inspect { width: 158px; }
.g-inspect .glabel { padding-left: 4px; }
.g-insert { width: 280px; }
.g-insert .glabel { padding-right: 4px; }
.g-select { width: 152px; border-right: 0; }
.g-select .icons { padding: 0 2px 0 0; }

/* canvas */
.viewport { position: relative; height: 1264px; flex: none; background: #fff; }
.scene { position: absolute; inset: 0; width: 2880px; height: 1264px; overflow: hidden; }
#plane path { fill: none; stroke-width: 1; vector-effect: non-scaling-stroke; }
#plane .grid-minor { stroke: #e9e9e9; }
#plane .grid-major { stroke: #c6c6c6; }
#plane .axis-x { stroke: #ff8585; stroke-width: 1.200; }
#plane .axis-y { stroke: #85ff85; stroke-width: 1.200; }
.edge-blue { fill: none; stroke: #56b1e2; stroke-width: 1.900; }
.edge-grey { fill: none; stroke: #96818c; stroke-width: 1.800; }
.edge-dark { fill: none; stroke: #111; stroke-width: 1.300; }
.link { stroke: #df8a4a; stroke-width: 1.800; stroke-dasharray: 12 5; }
.link-faint { fill: none; stroke: #b3592f; stroke-width: 1; stroke-dasharray: 12 5; opacity: .45; }
.pt-light { fill: #c98f8b; stroke: #954641; stroke-width: 1.500; }
.pt-dark { fill: #7c443f; stroke: #a5716c; stroke-width: 1.500; }
.viewcube text { font-family: "Open Sans", sans-serif; }
.face { font-size: 21px; font-weight: 700; fill: #9fa1a6; }
.back { font-size: 20px; }
.side { font-size: 15px; fill: #8d8f94; }
.axis { font-size: 27px; text-anchor: middle; }

/* floating panels */
.browser { position: absolute; left: 8px; top: 8px; }
.panel { width: 599px; height: 49px; background: #f1f1f1; border: 1px solid #ccc; border-right-width: 2px; border-bottom-width: 2px; display: flex; align-items: center; color: #666; }
.collapse { width: 20px; height: 12px; margin-left: 8px; }
.ptitle { margin: -2px 0 0 20px; flex: 1; letter-spacing: -.5px; }
.toggle { width: 16px; height: 16px; margin-right: 22px; }
.comments { position: absolute; left: 8px; top: 1206px; border-top: 0; }
.comments .ptitle { margin-left: 48px; letter-spacing: 0; }
.tree { list-style: none; margin: 11px 0 0; padding: 0; display: flex; flex-direction: column; gap: 8px; }
.tree li { display: flex; height: 40px; align-items: center; }
.l0 { padding-left: 36px; }
.l1 { padding-left: 72px; }
.l2 { padding-left: 108px; }
.tw { width: 16px; height: 20px; margin-right: 20px; }
.row { height: 40px; background: #f1f1f1; display: flex; align-items: center; padding-left: 6px; letter-spacing: .4px; white-space: nowrap; }
.row span { margin-top: -2px; }
.w296 { width: 296px; } .w284 { width: 284px; } .w196 { width: 196px; } .w228 { width: 228px; } .w206 { width: 206px; } .w230 { width: 230px; } .w222 { width: 222px; }
.eye { width: 32px; height: 22px; margin-right: 18px; }
.folder { width: 32px; height: 26px; margin-right: 27px; }
.sk { width: 32px; height: 32px; margin-right: 28px; }
.gear { width: 26px; height: 26px; color: #808080; margin-right: 26px; }
.units { width: 30px; height: 32px; margin-right: 30px; }
.sel { width: 196px; height: 32px; margin-left: -6px; padding-left: 9px; background: #999; color: #fff; display: flex; align-items: center; }
.sel b { margin: -2px 0 0 31px; letter-spacing: .1px; }
.cube { width: 27px; height: 28px; }
.radio { width: 27px; height: 27px; margin-left: 8px; }

.navbar { position: absolute; left: 1204px; top: 1204px; width: 474px; height: 48px; background: #f1f1f1; display: flex; align-items: center; padding: 0 0 2px 8px; }
.navbar svg { width: 30px; height: 30px; }
.navbar .c1 { margin-left: 10px; }
.navbar .c2 { margin-left: 5px; }
.navbar .m1 { margin-left: 14px; }
.navbar .m2 { margin-left: 21.500px; }
.navbar .m3 { margin-left: 14.500px; }
.assistant { position: absolute; left: 2823px; top: 1220px; width: 32px; height: 33px; }

/* timeline */
.timeline { height: 100px; flex: none; border-top: 5px solid #ccc; border-radius: 0 0 22px 22px; background: linear-gradient(#f1f1f1, #eee 40%, #d8d8d8); display: flex; }
.controls { width: 270px; padding: 0 0 0 22px; height: 97px; display: flex; align-items: center; justify-content: flex-start; }
.k1 { width: 22px; height: 24px; }
.k2 { width: 26px; height: 24px; margin-left: 26px; }
.k3 { width: 24px; height: 30px; margin: 0 0 0 26px; }
.k3 + .k2 { margin: 0 26px 0 24px; }
.features { position: relative; width: 260px; padding: 31px 0 0 22px; }
.feats { display: flex; gap: 16px; }
.feats svg { width: 32px; height: 32px; }
.bracket { width: 194px; height: 14px; margin: 6px 0 0 16px; }
.marker { position: absolute; left: 242px; top: 19px; width: 24px; height: 64px; }
.settings { width: 30px; height: 30px; margin: 33px 28px 0 auto; color: #808080; }
```

FILE: grid.js
```js
// Work plane: one unit is a major cell, split into five minor cells.
(function () {
  var minor = '', major = '';
  for (var i = -150; i <= 150; i++) {
    var p = i / 5;
    var seg = 'M' + p + ' -30V30M-30 ' + p + 'H30';
    if (i === 0) continue;
    if (i % 5 === 0) major += seg; else minor += seg;
  }
  document.getElementById('minor').setAttribute('d', minor);
  document.getElementById('major').setAttribute('d', major);
})();
```
